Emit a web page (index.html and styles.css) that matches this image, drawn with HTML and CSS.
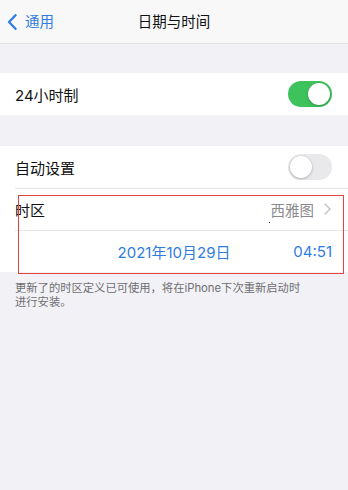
FILE: index.html
```html
<!DOCTYPE html>
<html lang="zh">
<head>
<meta charset="utf-8">
<link rel="stylesheet" href="styles.css">
</head>
<body>
<div class="screen">
  <header class="nav">
    <div class="back">
      <svg class="back-icon" width="10" height="16" viewBox="0 0 10 16"><path d="M8.5 1.2 L2 8 L8.5 14.8" fill="none" stroke="#2f7ce0" stroke-width="2.3" stroke-linecap="round" stroke-linejoin="round"/></svg>
      <span>通用</span>
    </div>
    <div class="title">日期与时间</div>
  </header>

  <section class="group first">
    <div class="row">
      <span class="label">24小时制</span>
      <span class="switch on"><span class="knob"></span></span>
    </div>
  </section>

  <section class="group second">
    <div class="row">
      <span class="label">自动设置</span>
      <span class="switch off"><span class="knob"></span></span>
    </div>
    <div class="row sep">
      <span class="label">时区</span>
      <span class="value">西雅图
        <svg class="chev" width="7" height="12" viewBox="0 0 7 12"><path d="M1 1 L6 6 L1 11" fill="none" stroke="#c4c4c8" stroke-width="1.5" stroke-linecap="round" stroke-linejoin="round"/></svg>
      </span>
    </div>
    <div class="row sep datetime">
      <span></span>
      <span class="date">2021年10月29日</span>
      <span class="time">04:51</span>
    </div>
  </section>

  <p class="footnote">更新了的时区定义已可使用，将在iPhone下次重新启动时<br>进行安装。</p>

  <div class="highlight"></div>
  <div class="speck"></div>
</div>
</body>
</html>
```

FILE: styles.css
```css
html, body {
  margin: 0;
  padding: 0;
}
body {
  background: #f2f2f6;
  font-family: "Inter", "Noto Sans CJK SC", sans-serif;
  color: #111;
}
.screen {
  position: relative;
  width: 348px;
  height: 490px;
  overflow: hidden;
  background: #f2f2f6;
}
.nav {
  height: 43px;
  background: #f8f8f8;
  border-bottom: 1px solid #e2e2e4;
  display: grid;
  grid-template-columns: 1fr auto 1fr;
  align-items: center;
}
.back {
  display: flex;
  align-items: center;
  gap: 8px;
  padding-left: 7px;
  color: #2f7ce0;
  font-size: 14.5px;
  line-height: 20px;
}
.back-icon {
  display: block;
}
.title {
  font-size: 14.5px;
  font-weight: 400;
  color: #111;
  line-height: 20px;
}
.group {
  background: #fff;
}
.group.first {
  margin-top: 29px;
}
.group.second {
  margin-top: 31px;
}
.row {
  height: 42px;
  display: flex;
  align-items: center;
  justify-content: space-between;
  padding: 0 16px 0 15px;
  position: relative;
}
.row.sep::before {
  content: "";
  position: absolute;
  left: 15px;
  right: 0;
  top: 0;
  height: 1px;
  background: #e6e6e8;
}
.label {
  font-size: 15px;
  color: #111;
}
.switch {
  width: 44px;
  height: 26px;
  border-radius: 13px;
  position: relative;
  box-sizing: border-box;
}
.switch.on {
  background: #3dc25c;
}
.switch.off {
  background: #e9e9eb;
}
.knob {
  position: absolute;
  top: 2px;
  width: 22px;
  height: 22px;
  border-radius: 50%;
  background: #fff;
  box-shadow: 0 1px 3px rgba(0,0,0,0.22), 0 0 0 0.5px rgba(0,0,0,0.06);
}
.switch.on .knob {
  right: 2px;
}
.switch.off .knob {
  left: 2px;
}
.value {
  display: flex;
  align-items: center;
  gap: 10px;
  font-size: 14.5px;
  color: #8a8a8e;
}
.chev {
  display: block;
  margin-right: 1px;
}
.datetime {
  display: grid;
  grid-template-columns: 1fr auto 1fr;
  font-size: 15px;
  color: #2f7ce0;
}
.date {
  padding-left: 1px;
}
.time {
  justify-self: end;
}
.footnote {
  margin: 9px 0 0;
  padding: 0 15px;
  font-size: 11.3px;
  line-height: 14px;
  color: #6e6e73;
}
.highlight {
  position: absolute;
  left: 18px;
  top: 195px;
  width: 326px;
  height: 79px;
  box-sizing: border-box;
  border: 1px solid #e5433b;
  pointer-events: none;
}
.speck {
  position: absolute;
  left: 269px;
  top: 222px;
  width: 1px;
  height: 1px;
  background: #333;
}
```
